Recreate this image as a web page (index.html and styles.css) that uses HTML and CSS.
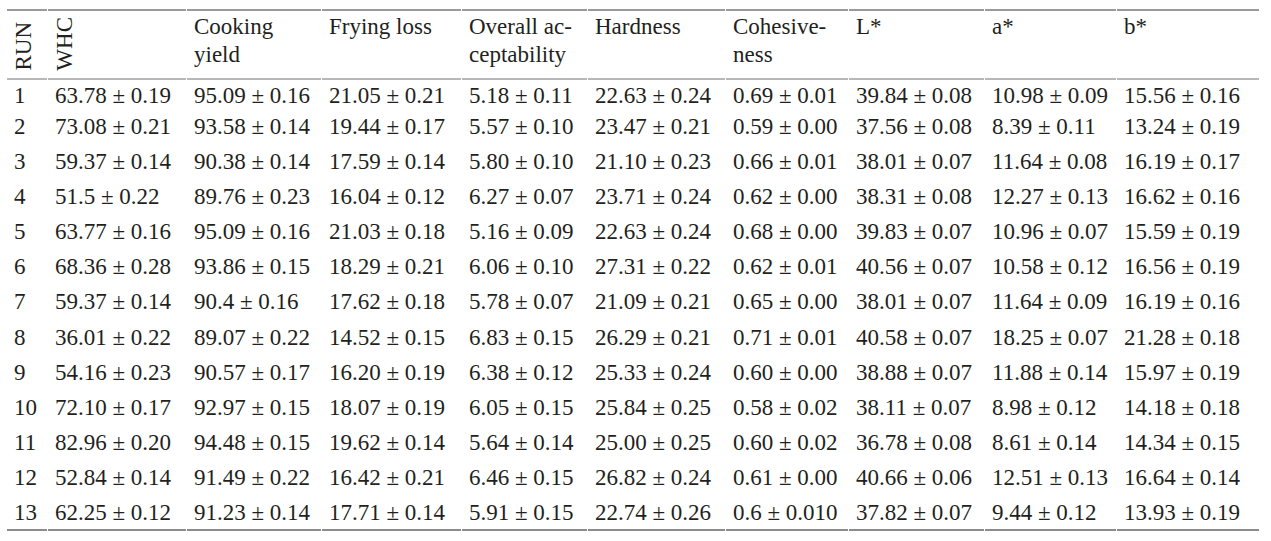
FILE: index.html
```html
<!DOCTYPE html>
<html lang="en">
<head>
<meta charset="utf-8">
<title>Table</title>
<link rel="stylesheet" href="styles.css">
</head>
<body>
<table class="data">
  <colgroup>
    <col class="c-run"><col class="c-whc"><col class="c-cook"><col class="c-fry"><col class="c-over">
    <col class="c-hard"><col class="c-coh"><col class="c-l"><col class="c-a"><col class="c-b">
  </colgroup>
  <thead>
    <tr>
      <th class="rot"><span class="vert">RUN</span></th>
      <th class="rot"><span class="vert">WHC</span></th>
      <th>Cooking<br>yield</th>
      <th>Frying loss</th>
      <th>Overall ac-<br>ceptability</th>
      <th>Hardness</th>
      <th>Cohesive-<br>ness</th>
      <th>L*</th>
      <th>a*</th>
      <th>b*</th>
    </tr>
  </thead>
  <tbody>
    <tr><td>1</td><td>63.78 ± 0.19</td><td>95.09 ± 0.16</td><td>21.05 ± 0.21</td><td>5.18 ± 0.11</td><td>22.63 ± 0.24</td><td>0.69 ± 0.01</td><td>39.84 ± 0.08</td><td>10.98 ± 0.09</td><td>15.56 ± 0.16</td></tr>
    <tr><td>2</td><td>73.08 ± 0.21</td><td>93.58 ± 0.14</td><td>19.44 ± 0.17</td><td>5.57 ± 0.10</td><td>23.47 ± 0.21</td><td>0.59 ± 0.00</td><td>37.56 ± 0.08</td><td>8.39 ± 0.11</td><td>13.24 ± 0.19</td></tr>
    <tr><td>3</td><td>59.37 ± 0.14</td><td>90.38 ± 0.14</td><td>17.59 ± 0.14</td><td>5.80 ± 0.10</td><td>21.10 ± 0.23</td><td>0.66 ± 0.01</td><td>38.01 ± 0.07</td><td>11.64 ± 0.08</td><td>16.19 ± 0.17</td></tr>
    <tr><td>4</td><td>51.5 ± 0.22</td><td>89.76 ± 0.23</td><td>16.04 ± 0.12</td><td>6.27 ± 0.07</td><td>23.71 ± 0.24</td><td>0.62 ± 0.00</td><td>38.31 ± 0.08</td><td>12.27 ± 0.13</td><td>16.62 ± 0.16</td></tr>
    <tr><td>5</td><td>63.77 ± 0.16</td><td>95.09 ± 0.16</td><td>21.03 ± 0.18</td><td>5.16 ± 0.09</td><td>22.63 ± 0.24</td><td>0.68 ± 0.00</td><td>39.83 ± 0.07</td><td>10.96 ± 0.07</td><td>15.59 ± 0.19</td></tr>
    <tr><td>6</td><td>68.36 ± 0.28</td><td>93.86 ± 0.15</td><td>18.29 ± 0.21</td><td>6.06 ± 0.10</td><td>27.31 ± 0.22</td><td>0.62 ± 0.01</td><td>40.56 ± 0.07</td><td>10.58 ± 0.12</td><td>16.56 ± 0.19</td></tr>
    <tr><td>7</td><td>59.37 ± 0.14</td><td>90.4 ± 0.16</td><td>17.62 ± 0.18</td><td>5.78 ± 0.07</td><td>21.09 ± 0.21</td><td>0.65 ± 0.00</td><td>38.01 ± 0.07</td><td>11.64 ± 0.09</td><td>16.19 ± 0.16</td></tr>
    <tr><td>8</td><td>36.01 ± 0.22</td><td>89.07 ± 0.22</td><td>14.52 ± 0.15</td><td>6.83 ± 0.15</td><td>26.29 ± 0.21</td><td>0.71 ± 0.01</td><td>40.58 ± 0.07</td><td>18.25 ± 0.07</td><td>21.28 ± 0.18</td></tr>
    <tr><td>9</td><td>54.16 ± 0.23</td><td>90.57 ± 0.17</td><td>16.20 ± 0.19</td><td>6.38 ± 0.12</td><td>25.33 ± 0.24</td><td>0.60 ± 0.00</td><td>38.88 ± 0.07</td><td>11.88 ± 0.14</td><td>15.97 ± 0.19</td></tr>
    <tr><td>10</td><td>72.10 ± 0.17</td><td>92.97 ± 0.15</td><td>18.07 ± 0.19</td><td>6.05 ± 0.15</td><td>25.84 ± 0.25</td><td>0.58 ± 0.02</td><td>38.11 ± 0.07</td><td>8.98 ± 0.12</td><td>14.18 ± 0.18</td></tr>
    <tr><td>11</td><td>82.96 ± 0.20</td><td>94.48 ± 0.15</td><td>19.62 ± 0.14</td><td>5.64 ± 0.14</td><td>25.00 ± 0.25</td><td>0.60 ± 0.02</td><td>36.78 ± 0.08</td><td>8.61 ± 0.14</td><td>14.34 ± 0.15</td></tr>
    <tr><td>12</td><td>52.84 ± 0.14</td><td>91.49 ± 0.22</td><td>16.42 ± 0.21</td><td>6.46 ± 0.15</td><td>26.82 ± 0.24</td><td>0.61 ± 0.00</td><td>40.66 ± 0.06</td><td>12.51 ± 0.13</td><td>16.64 ± 0.14</td></tr>
    <tr><td>13</td><td>62.25 ± 0.12</td><td>91.23 ± 0.14</td><td>17.71 ± 0.14</td><td>5.91 ± 0.15</td><td>22.74 ± 0.26</td><td>0.6 ± 0.010</td><td>37.82 ± 0.07</td><td>9.44 ± 0.12</td><td>13.93 ± 0.19</td></tr>
  </tbody>
</table>
</body>
</html>
```
FILE: styles.css
```css
html, body {
  margin: 0;
  padding: 0;
  background: #ffffff;
}

body {
  font-family: "Liberation Serif", "Times New Roman", serif;
  font-size: 23px;
  color: #231f20;
}

.data {
  margin: 9px 0 0 6px;
  border-collapse: separate;
  border-spacing: 1px 0;
  table-layout: fixed;
  width: 1254px;
}

.c-run { width: 40px; }
.c-whc { width: 138px; }
.c-cook { width: 134px; }
.c-fry { width: 139px; }
.c-over { width: 125px; }
.c-hard { width: 137px; }
.c-coh { width: 122px; }
.c-l { width: 135px; }
.c-a { width: 131px; }
.c-b { width: 142px; }

.data th,
.data td {
  text-align: left;
  white-space: nowrap;
  padding: 0 0 0 7px;
}

.data th {
  font-weight: normal;
  vertical-align: top;
  line-height: 28px;
  padding-top: 2px;
  padding-bottom: 9px;
  border-top: 2px solid #9a9a9a;
  border-bottom: 2px solid #b8b8b8;
}

.data th.rot {
  vertical-align: bottom;
  padding-bottom: 7px;
}

.vert {
  display: block;
  writing-mode: vertical-rl;
  transform: rotate(180deg);
  line-height: 20px;
}

.data td {
  line-height: 24px;
  padding-top: 7px;
  padding-bottom: 4.1px;
  vertical-align: top;
}

.data tbody tr:first-child td {
  padding-top: 4px;
  padding-bottom: 0;
}

.data tbody tr:last-child td {
  border-bottom: 2px solid #8c8c8c;
}
```
